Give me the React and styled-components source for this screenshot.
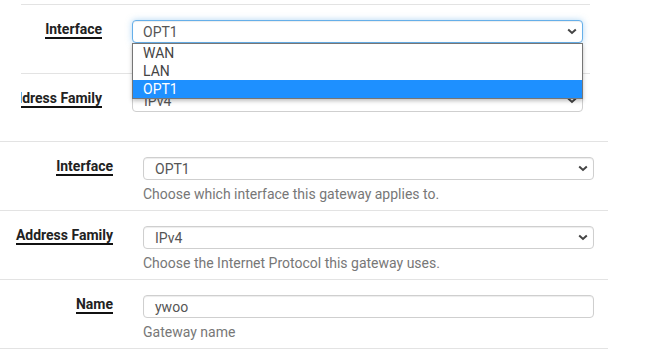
import React from "react";
import styled, { createGlobalStyle } from "styled-components";

const GlobalStyle = createGlobalStyle`
  body {
    margin: 0;
    background: #fff;
    font-family: Roboto, "Liberation Sans", sans-serif;
  }
`;

const Page = styled.div`
  display: flex;
  flex-direction: column;
  width: 649px;
  height: 356px;
  overflow: hidden;
`;

// the upper strip is a cropped view of the same form with the menu open
const Crop = styled.div`
  margin-left: 21px;
  width: 569px;
  height: 116px;
  padding-top: 4px;
  box-sizing: border-box;
  overflow: hidden;
`;

const Form = styled.div`
  width: ${(p) => p.$width}px;
  margin-left: ${(p) => p.$shift || 0}px;
  margin-top: ${(p) => p.$top || 0}px;
  border-bottom: 1px solid #e3e3e3;
`;

const Row = styled.div`
  display: grid;
  grid-template-columns: 113px 1fr;
  column-gap: 30px;
  height: 69px;
  box-sizing: border-box;
  padding: 15px 14px 0 0;
  border-top: 1px solid #e3e3e3;
`;

const Label = styled.div`
  text-align: right;
  padding-top: 0;
  font-size: 14px;
  font-weight: 700;
  line-height: 18px;
  color: #222;
  white-space: nowrap;
  span {
    border-bottom: 2px solid #111;
  }
`;

const Control = styled.div`
  position: relative;
  display: flex;
  flex-direction: column;
`;

const Field = styled.div`
  display: flex;
  align-items: center;
  justify-content: space-between;
  height: 23px;
  box-sizing: border-box;
  padding: 0 5px 0 ${(p) => (p.$focused ? 10 : 11)}px;
  border: 1px solid ${(p) => (p.$focused ? "#66afe9" : "#cfcfcf")};
  border-radius: 4px;
  box-shadow: ${(p) =>
    p.$focused
      ? "inset 0 1px 1px rgba(0,0,0,.075), 0 0 6px rgba(102,175,233,.5)"
      : "inset 0 1px 1px rgba(0,0,0,.075)"};
  background: #fff;
  font-size: 14px;
  color: #555;
`;

const Help = styled.div`
  margin-top: 5px;
  font-size: 14px;
  line-height: 18px;
  color: #777;
`;

const Menu = styled.ul`
  position: absolute;
  top: 23px;
  left: 0;
  right: 0;
  margin: 0;
  padding: 0;
  list-style: none;
  background: #fff;
  border: 1px solid #767676;
  box-shadow: 0 2px 4px rgba(0, 0, 0, 0.25);
  z-index: 2;
`;

const Option = styled.li`
  height: 18px;
  line-height: 18px;
  padding-left: 10px;
  font-size: 14px;
  color: ${(p) => (p.$active ? "#fff" : "#444")};
  background: ${(p) => (p.$active ? "#1e90ff" : "transparent")};
`;

const Chevron = () => (
  <svg width="10" height="7" viewBox="0 0 10 7">
    <path d="M1.2 1.5 L5 5 L8.8 1.5" fill="none" stroke="#444" strokeWidth="2" />
  </svg>
);

const Select = ({ value, focused }) => (
  <Field $focused={focused}>
    <span>{value}</span>
    <Chevron />
  </Field>
);

const Input = ({ value }) => (
  <Field>
    <span>{value}</span>
  </Field>
);

export default function App() {
  return (
    <Page>
      <GlobalStyle />
      <Crop>
        <Form $width={608} $shift={-32}>
          <Row>
            <Label>
              <span>Interface</span>
            </Label>
            <Control>
              <Select value="OPT1" focused />
              <Menu>
                <Option>WAN</Option>
                <Option>LAN</Option>
                <Option $active>OPT1</Option>
              </Menu>
              <Help>Choose which interface this gateway applies to.</Help>
            </Control>
          </Row>
          <Row>
            <Label>
              <span>Address Family</span>
            </Label>
            <Control>
              <Select value="IPv4" />
              <Help>Choose the Internet Protocol this gateway uses.</Help>
            </Control>
          </Row>
        </Form>
      </Crop>

      <Form $width={608} $top={25}>
        <Row>
          <Label>
            <span>Interface</span>
          </Label>
          <Control>
            <Select value="OPT1" />
            <Help>Choose which interface this gateway applies to.</Help>
          </Control>
        </Row>
        <Row>
          <Label>
            <span>Address Family</span>
          </Label>
          <Control>
            <Select value="IPv4" />
            <Help>Choose the Internet Protocol this gateway uses.</Help>
          </Control>
        </Row>
        <Row>
          <Label>
            <span>Name</span>
          </Label>
          <Control>
            <Input value="ywoo" />
            <Help>Gateway name</Help>
          </Control>
        </Row>
      </Form>
    </Page>
  );
}
